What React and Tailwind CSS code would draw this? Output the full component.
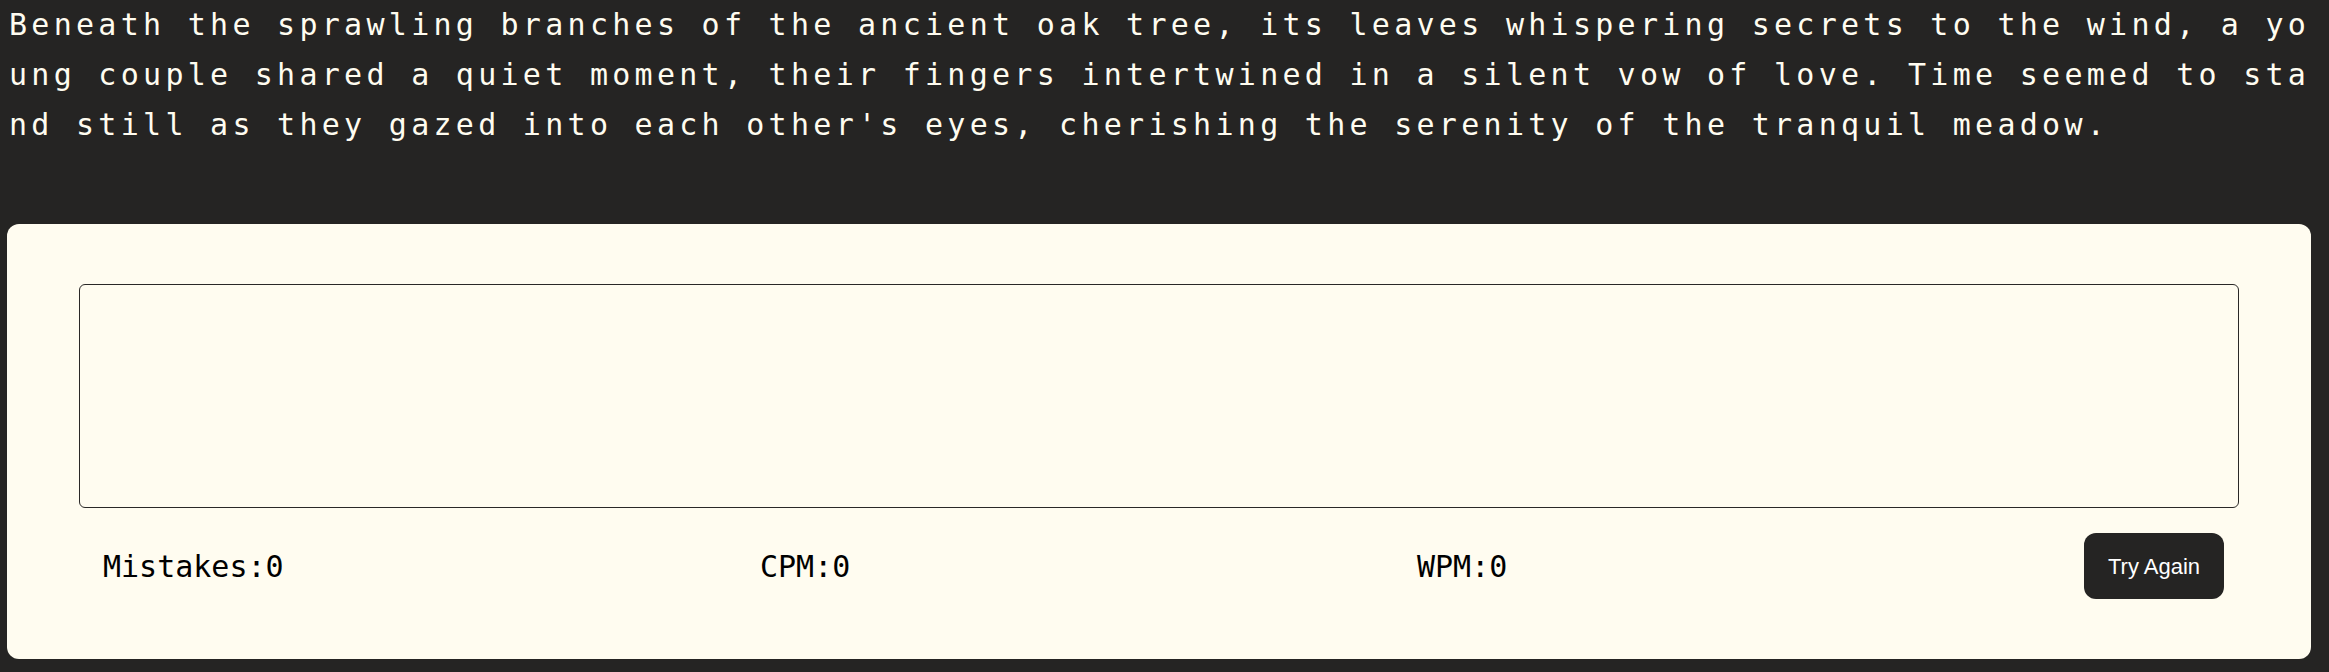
export default function App() {
  const text =
    "Beneath the sprawling branches of the ancient oak tree, its leaves whispering secrets to the wind, a young couple shared a quiet moment, their fingers intertwined in a silent vow of love. Time seemed to stand still as they gazed into each other's eyes, cherishing the serenity of the tranquil meadow."

  return (
    <div className="min-h-screen w-full bg-[#252423] pl-[7px] font-['DejaVu_Sans_Mono',monospace]">
      {/* Passage to type */}
      <p className="w-[2304px] pl-[2px] text-[30px] leading-[50px] tracking-[4.28px] text-[#fffcf0] break-all">
        {text}
      </p>

      {/* Typing card */}
      <div className="mt-[74px] w-[2304px] rounded-xl bg-[#fffcf0] px-[72px] pt-[60px] pb-[60px]">
        <textarea className="block h-[224px] w-full resize-none rounded-md border border-[#2a2827] bg-transparent outline-none" />

        <div className="mt-[25px] flex items-center pl-[24px] pr-[15px] text-[30px] text-black">
          <div className="w-[657px]">Mistakes:0</div>
          <div className="w-[657px]">CPM:0</div>
          <div className="w-[657px]">WPM:0</div>
          <button className="ml-auto flex h-[66px] w-[140px] items-center justify-center rounded-xl bg-[#252423] font-['Liberation_Sans',Arial,sans-serif] text-[22px] text-white">
            Try Again
          </button>
        </div>
      </div>
    </div>
  )
}
